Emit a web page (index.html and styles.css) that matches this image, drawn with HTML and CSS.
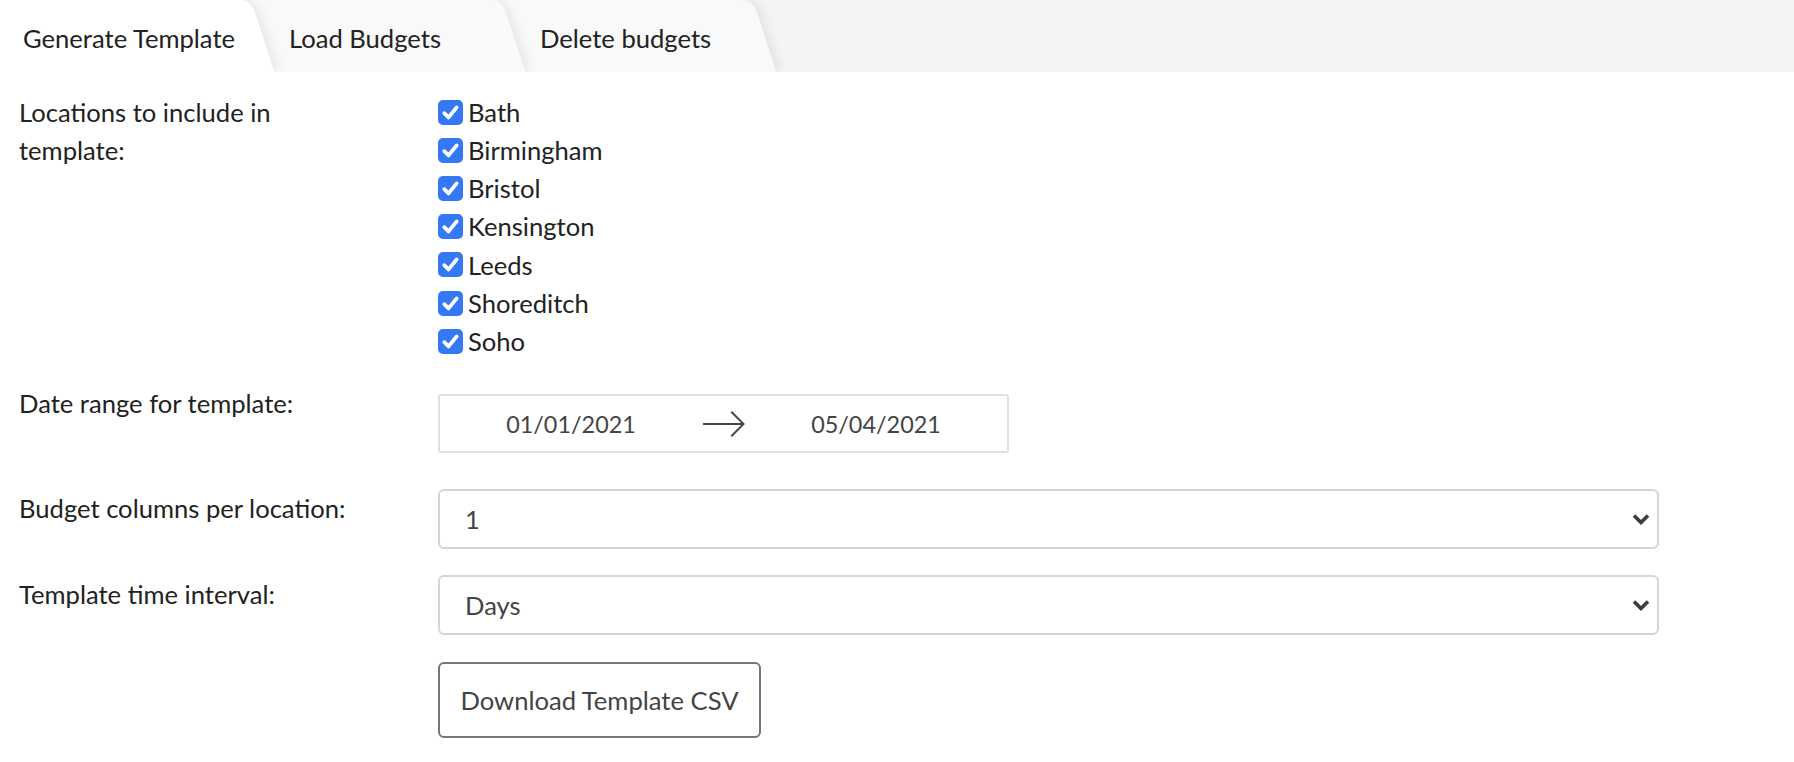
FILE: index.html
```html
<!DOCTYPE html>
<html lang="en">
<head>
<meta charset="utf-8">
<title>Budgets</title>
<link rel="stylesheet" href="styles.css">
</head>
<body>
<nav class="tabs">
  <div class="tab tab--active">Generate Template</div>
  <div class="tab">Load Budgets</div>
  <div class="tab">Delete budgets</div>
</nav>
<main class="form">
  <div class="field-row field-row--locations">
    <div class="label">Locations to include in template:</div>
    <div class="checks">
      <label class="check"><span class="box"><svg viewBox="0 0 25 25" width="25" height="25"><path d="M6.3 13.2 L10.5 17.4 L18.7 7.4" fill="none" stroke="#fff" stroke-width="3.8" stroke-linecap="round" stroke-linejoin="round"/></svg></span>Bath</label>
      <label class="check"><span class="box"><svg viewBox="0 0 25 25" width="25" height="25"><path d="M6.3 13.2 L10.5 17.4 L18.7 7.4" fill="none" stroke="#fff" stroke-width="3.8" stroke-linecap="round" stroke-linejoin="round"/></svg></span>Birmingham</label>
      <label class="check"><span class="box"><svg viewBox="0 0 25 25" width="25" height="25"><path d="M6.3 13.2 L10.5 17.4 L18.7 7.4" fill="none" stroke="#fff" stroke-width="3.8" stroke-linecap="round" stroke-linejoin="round"/></svg></span>Bristol</label>
      <label class="check"><span class="box"><svg viewBox="0 0 25 25" width="25" height="25"><path d="M6.3 13.2 L10.5 17.4 L18.7 7.4" fill="none" stroke="#fff" stroke-width="3.8" stroke-linecap="round" stroke-linejoin="round"/></svg></span>Kensington</label>
      <label class="check"><span class="box"><svg viewBox="0 0 25 25" width="25" height="25"><path d="M6.3 13.2 L10.5 17.4 L18.7 7.4" fill="none" stroke="#fff" stroke-width="3.8" stroke-linecap="round" stroke-linejoin="round"/></svg></span>Leeds</label>
      <label class="check"><span class="box"><svg viewBox="0 0 25 25" width="25" height="25"><path d="M6.3 13.2 L10.5 17.4 L18.7 7.4" fill="none" stroke="#fff" stroke-width="3.8" stroke-linecap="round" stroke-linejoin="round"/></svg></span>Shoreditch</label>
      <label class="check"><span class="box"><svg viewBox="0 0 25 25" width="25" height="25"><path d="M6.3 13.2 L10.5 17.4 L18.7 7.4" fill="none" stroke="#fff" stroke-width="3.8" stroke-linecap="round" stroke-linejoin="round"/></svg></span>Soho</label>
    </div>
  </div>

  <div class="field-row">
    <div class="label">Date range for template:</div>
    <div class="date-range">
      <span class="date">01/01/2021</span>
      <span class="arrow"><svg viewBox="0 0 44 28" width="44" height="28"><path d="M1 14 H42 M30 1.5 L42.5 14 L30 26.5" fill="none" stroke="#444" stroke-width="2"/></svg></span>
      <span class="date">05/04/2021</span>
    </div>
  </div>

  <div class="field-row">
    <div class="label">Budget columns per location:</div>
    <div class="select"><span>1</span><svg viewBox="0 0 18 12" width="18" height="12"><path d="M2 2.5 L9 9.5 L16 2.5" fill="none" stroke="#3a3d42" stroke-width="3.6"/></svg></div>
  </div>

  <div class="field-row">
    <div class="label">Template time interval:</div>
    <div class="select"><span>Days</span><svg viewBox="0 0 18 12" width="18" height="12"><path d="M2 2.5 L9 9.5 L16 2.5" fill="none" stroke="#3a3d42" stroke-width="3.6"/></svg></div>
  </div>

  <div class="field-row field-row--last">
    <div class="label"></div>
    <div><button class="btn" type="button">Download Template CSV</button></div>
  </div>
</main>
</body>
</html>
```

FILE: styles.css
```css
* { box-sizing: border-box; }

html, body {
  margin: 0;
  background: #fff;
}

body {
  font-family: Lato, "Noto Sans", sans-serif;
  font-size: 25.6px;
  line-height: 38.4px;
  color: #212529;
}

/* Tabs */
.tabs {
  display: flex;
  height: 72px;
  background: #f4f4f4;
  overflow: hidden;
}

.tab {
  position: relative;
  width: 251px;
  padding-left: 38px;
  padding-top: 4px;
  display: flex;
  align-items: center;
  color: #222;
  white-space: nowrap;
}

.tab:nth-child(1) { padding-left: 23px; z-index: 3; }
.tab:nth-child(2) { z-index: 2; }
.tab:nth-child(3) { z-index: 1; }

.tab::before {
  content: "";
  position: absolute;
  top: 0;
  bottom: 0;
  left: -40px;
  right: 0;
  background: #f9f9f9;
  transform: skewX(18deg);
  transform-origin: top left;
  border-top-right-radius: 10px;
  box-shadow: 5px 0 9px rgba(0, 0, 0, 0.07);
  z-index: -1;
}

.tab--active::before { background: #fff; }

/* Form */
.form {
  padding: 21px 135px 0 19px;
}

.field-row {
  display: grid;
  grid-template-columns: 350px 1fr;
  column-gap: 69px;
  margin-bottom: 26px;
}

.field-row--locations { margin-bottom: 24px; }
.field-row--last { margin-bottom: 0; }

.label { color: #222; }

.checks {
  display: flex;
  flex-direction: column;
}

.check {
  display: flex;
  align-items: center;
  gap: 5px;
  height: 38.2px;
  color: #222;
}

.box {
  width: 25px;
  height: 25px;
  border-radius: 5px;
  background: #3478f6;
  display: flex;
}

.date-range {
  margin: 10px 0;
  width: 571px;
  height: 59px;
  border: 2px solid #e0e0e0;
  border-radius: 3px;
  display: flex;
  align-items: center;
  color: #444;
  font-size: 23.4px;
}

.date {
  width: 262px;
  text-align: center;
}

.arrow {
  width: 43px;
  display: flex;
  justify-content: center;
}

.select {
  height: 60px;
  border: 2px solid #d3d6da;
  border-radius: 6px;
  display: flex;
  align-items: center;
  justify-content: space-between;
  padding: 0 7px 0 25px;
  color: #444;
}

.btn {
  margin-top: 1px;
  width: 323px;
  height: 76px;
  padding: 0;
  border: 2px solid #777;
  border-radius: 6px;
  background: #fff;
  font: inherit;
  color: #444;
}
```
